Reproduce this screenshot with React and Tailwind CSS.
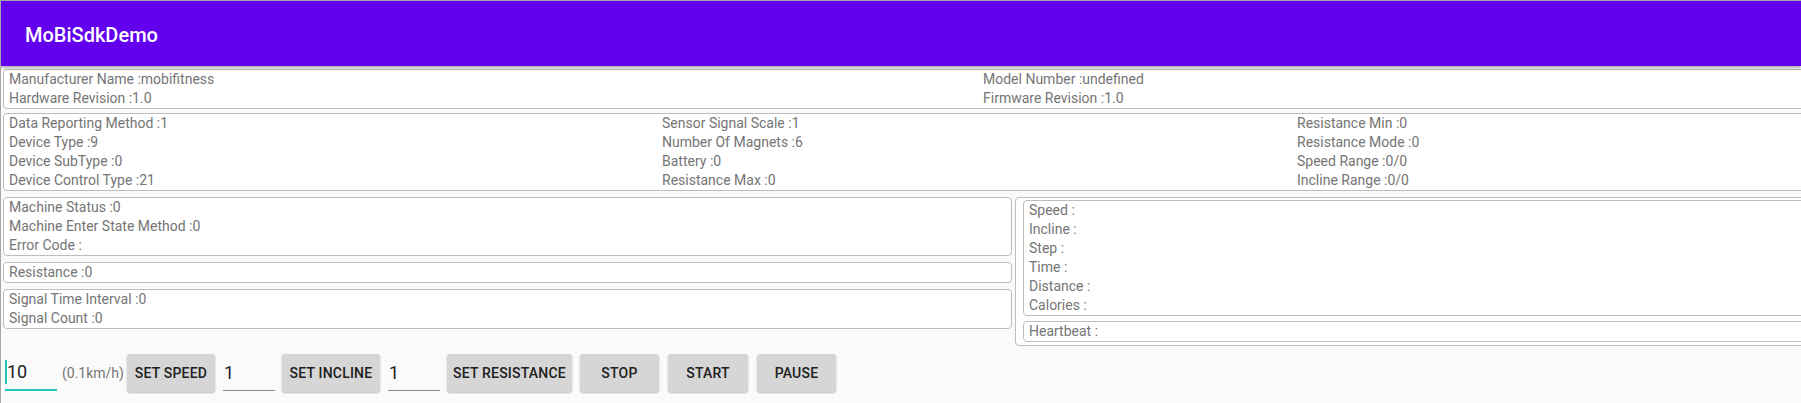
import React from "react";

const Box = ({ className = "", children }) => (
  <div className={"border border-[#bdbdbd] rounded-[4px] bg-white pl-[5px] " + className}>
    {children}
  </div>
);

const Line = ({ children }) => <div className="h-[19px] whitespace-nowrap">{children}</div>;

const Field = ({ value, focused, className = "" }) => (
  <div
    className={
      "w-[52px] h-[36px] flex items-center " +
      (focused ? "border-b-2 border-[#1fc8b5] " : "border-b border-[#8c8c8c] h-[35px] ") +
      className
    }
  >
    {focused ? <span className="w-[2px] h-[24px] bg-[#1fc8b5]" /> : null}
    <span className={"text-[18px] leading-none text-[#212121] " + (focused ? "" : "pl-[1px]")}>
      {value}
    </span>
  </div>
);

const Btn = ({ children, w }) => (
  <button
    className={
      "h-[38px] rounded-[3px] bg-[#d6d6d6] text-[14px] font-medium text-[#202020] tracking-[0.2px] shadow-[0_1px_2px_rgba(0,0,0,0.25)] flex items-center justify-center " +
      w
    }
  >
    {children}
  </button>
);

export default function App() {
  return (
    <div className="w-[1801px] h-[403px] overflow-hidden bg-[#fafafa] border-t border-l border-[#a6a6a6] font-['Roboto',sans-serif]">
      <div className="h-[65px] bg-[#6200ee] flex items-center pl-[24px] pt-[2px] shadow-[0_2px_3px_rgba(0,0,0,0.3)] relative">
        <h1 className="text-white text-[20px] font-medium leading-none">MoBiSdkDemo</h1>
      </div>

      <div className="w-[1980px] pl-[2px] pt-[3px] text-[14px] leading-[19px] text-[#757575]">
        <Box className="flex">
          <div className="w-[974px]">
            <Line>Manufacturer Name :mobifitness</Line>
            <Line>Hardware Revision :1.0</Line>
          </div>
          <div>
            <Line>Model Number :undefined</Line>
            <Line>Firmware Revision :1.0</Line>
          </div>
        </Box>

        <Box className="flex mt-[4px]">
          <div className="w-[653px]">
            <Line>Data Reporting Method :1</Line>
            <Line>Device Type :9</Line>
            <Line>Device SubType :0</Line>
            <Line>Device Control Type :21</Line>
          </div>
          <div className="w-[635px]">
            <Line>Sensor Signal Scale :1</Line>
            <Line>Number Of Magnets :6</Line>
            <Line>Battery :0</Line>
            <Line>Resistance Max :0</Line>
          </div>
          <div>
            <Line>Resistance Min :0</Line>
            <Line>Resistance Mode :0</Line>
            <Line>Speed Range :0/0</Line>
            <Line>Incline Range :0/0</Line>
          </div>
        </Box>

        <div className="flex gap-[3px] mt-[6px] items-start">
          <div className="w-[1009px] flex flex-col gap-[6px]">
            <Box>
              <Line>Machine Status :0</Line>
              <Line>Machine Enter State Method :0</Line>
              <Line>Error Code :</Line>
            </Box>
            <Box>
              <Line>Resistance :0</Line>
            </Box>
            <Box>
              <Line>Signal Time Interval :0</Line>
              <Line>Signal Count :0</Line>
            </Box>
          </div>

          <div className="flex-1 border border-[#bdbdbd] rounded-[4px] bg-white pl-[7px] pt-[2px] pb-[3px]">
            <Box>
              <Line>Speed :</Line>
              <Line>Incline :</Line>
              <Line>Step :</Line>
              <Line>Time :</Line>
              <Line>Distance :</Line>
              <Line>Calories :</Line>
            </Box>
            <Box className="mt-[5px]">
              <Line>Heartbeat :</Line>
            </Box>
          </div>
        </div>
      </div>

      <div className="flex items-center mt-[8px] h-[38px] text-[14px]">
        <Field value="10" focused className="ml-[4px]" />
        <span className="ml-[5px] text-[#757575] whitespace-nowrap">(0.1km/h)</span>
        <div className="ml-[3px]">
          <Btn w="w-[88px]">SET SPEED</Btn>
        </div>
        <Field value="1" className="ml-[8px]" />
        <div className="ml-[7px]">
          <Btn w="w-[98px]">SET INCLINE</Btn>
        </div>
        <Field value="1" className="ml-[8px]" />
        <div className="ml-[7px]">
          <Btn w="w-[125px]">SET RESISTANCE</Btn>
        </div>
        <div className="ml-[8px] flex gap-[9px]">
          <Btn w="w-[79px]">STOP</Btn>
          <Btn w="w-[80px]">START</Btn>
          <Btn w="w-[79px]">PAUSE</Btn>
        </div>
      </div>
    </div>
  );
}
